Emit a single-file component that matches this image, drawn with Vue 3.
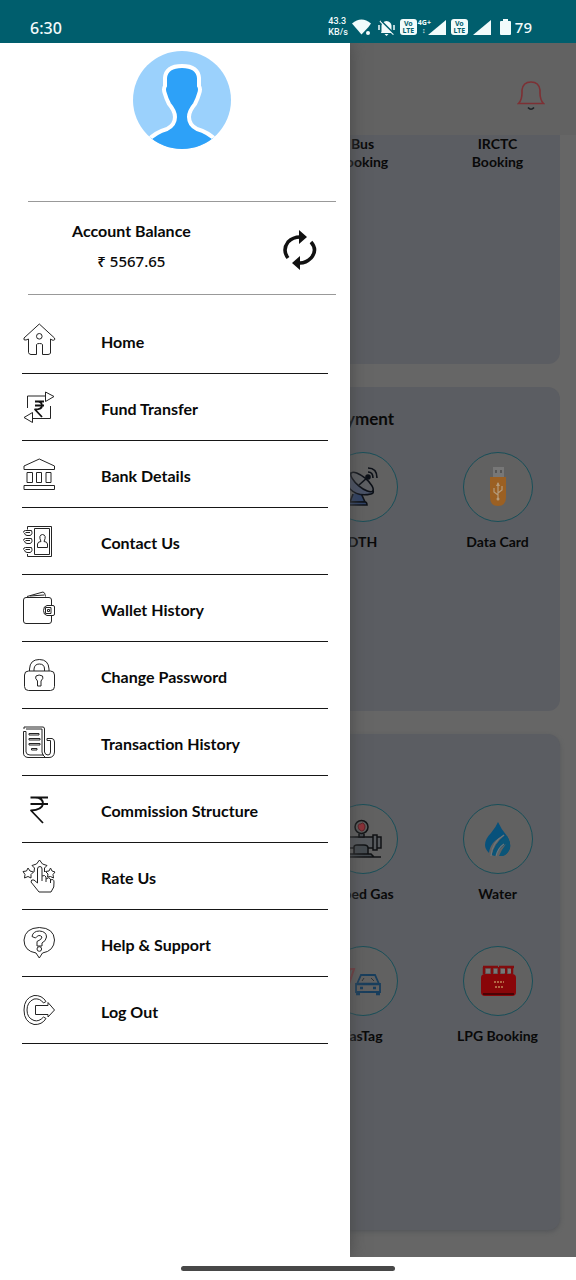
<script setup>
const menu = [
  { id: 'home', label: 'Home' },
  { id: 'fund', label: 'Fund Transfer' },
  { id: 'bank', label: 'Bank Details' },
  { id: 'contact', label: 'Contact Us' },
  { id: 'wallet', label: 'Wallet History' },
  { id: 'password', label: 'Change Password' },
  { id: 'history', label: 'Transaction History' },
  { id: 'commission', label: 'Commission Structure' },
  { id: 'rate', label: 'Rate Us' },
  { id: 'help', label: 'Help & Support' },
  { id: 'logout', label: 'Log Out' },
]
</script>

<template>
  <div class="screen">
    <header class="status">
      <span class="clock">6:30</span>
      <div class="indicators">
        <div class="speed"><span>43.3</span><span>KB/s</span></div>
        <svg class="wifi" width="19" height="17" viewBox="0 0 19 17" aria-hidden="true">
          <path d="M0 4.500Q9.500-3.500 19 4.500L16.500 8L9.500 15.500Z" fill="#f2fbfb" />
          <circle cx="16" cy="14" r="2" fill="#f2fbfb" />
        </svg>
        <svg class="mute" width="17" height="17" viewBox="0 0 17 17" aria-hidden="true">
          <path d="M3.500 12.500V6.500Q4 2.500 8.500 2Q13 2.500 13.500 6.500V12.500L14 14H3ZM6.500 15H10.500L8.500 17Z" fill="#f2fbfb" />
          <path d="M1 6V11M16 6V11M2 2L15.500 15.500" stroke="#f2fbfb" stroke-width="1.500" />
          <path d="M3 1.500L16 14.500" stroke="#005e6d" stroke-width="1.500" />
        </svg>
        <span class="volte">Vo<br />LTE</span>
        <span class="net">4G+<br />↕</span>
        <svg class="signal" width="18" height="15" viewBox="0 0 18 15" aria-hidden="true"><path d="M18 0V15H0Z" fill="#f2fbfb" /></svg>
        <span class="volte second">Vo<br />LTE</span>
        <svg class="signal two" width="18" height="15" viewBox="0 0 18 15" aria-hidden="true"><path d="M18 0V15H0Z" fill="#f2fbfb" /></svg>
        <svg class="battery" width="11" height="16" viewBox="0 0 11 16" aria-hidden="true"><path d="M3 0H8V2H10Q11 2 11 3V15Q11 16 10 16H1Q0 16 0 15V3Q0 2 1 2H3Z" fill="#f2fbfb" /></svg>
        <span class="percent">79</span>
      </div>
    </header>

    <div class="stage">
      <main class="page">
        <div class="topbar">
          <button class="bell" type="button" aria-label="Notifications">
            <svg width="28" height="32" viewBox="0 0 28 32" fill="none">
              <path d="M1.500 23.500Q5 20 5 13V10Q6 2 14 2Q22 2 23 10V13Q23 20 26.500 23.500Z" stroke="#7d3034" stroke-width="1.600" />
              <path d="M11 27.500Q14 31 17 27.500" stroke="#1d2226" stroke-width="1.600" />
            </svg>
          </button>
        </div>

        <section class="card travel">
          <div class="tiles">
            <div class="tile third"><span>Bus<br />Booking</span></div>
            <div class="tile"><span>IRCTC<br />Booking</span></div>
          </div>
        </section>

        <section class="card recharge">
          <h2>Payment</h2>
          <div class="tiles">
            <div class="tile third">
              <div class="disc">
                <svg width="44" height="44" viewBox="3 0 44 44" fill="none" stroke="#0d1118" stroke-width="1.600">
                  <path d="M15 29L12 37H27L22 26" fill="#2f4266" />
                  <path d="M8 40V37H27Q29 37 29 40Z" fill="#2f4266" />
                  <path d="M13 8Q5 15 12 24Q20 32 33 29Q37 28 34 24Z" fill="#4a5368" />
                  <ellipse cx="24" cy="17" rx="14" ry="5" transform="rotate(40 24 17)" fill="#5d5f63" />
                  <path d="M21 20L30 12" /><circle cx="30" cy="12" r="2" fill="#0d1118" />
                  <path d="M30 7Q35 7 35 13M30 3Q39 3 39 13" />
                </svg>
              </div>
              <span>DTH</span>
            </div>
            <div class="tile">
              <div class="disc">
                <svg width="44" height="44" viewBox="0 0 44 44">
                  <rect x="17" y="2" width="11" height="10" fill="#777" />
                  <path d="M20 5V8M25 5V8" stroke="#555" stroke-width="2" />
                  <path d="M14 12H30V32Q30 41 22 41Q14 41 14 32Z" fill="#9b6023" />
                  <path d="M22 18V35M22 30L18 27V23M22 28L26 25V21" fill="none" stroke="#b59b7b" stroke-width="1.200" />
                  <path d="M20 21L22 17L24 21Z" fill="#b59b7b" /><circle cx="22" cy="34" r="1.500" fill="#b59b7b" />
                </svg>
              </div>
              <span>Data Card</span>
            </div>
          </div>
        </section>

        <section class="card utility">
          <div class="tiles">
            <div class="tile third">
              <div class="disc">
                <svg width="44" height="44" viewBox="1 1 44 44" fill="none" stroke="#101214" stroke-width="1.500">
                  <path d="M1 21H33V32H1ZM33 19H37V34H33ZM37 21H41V32H37ZM1 19H7V34H1Z" fill="#56595d" />
                  <path d="M14 38V31Q14 29 17 29H24Q28 29 28 32V38M9 38H31L34 41H6ZM1 41H41M19 18V21H24V18" fill="#444a4f" />
                  <circle cx="21.500" cy="11" r="6.500" fill="#5c5c5c" />
                  <path d="M18 10Q19 7 21 8Q23 5 25 10Q25 15 21.500 15Q18 14 18 10Z" fill="#8c3037" stroke="#5d2025" stroke-width="1" />
                </svg>
              </div>
              <span>Piped Gas</span>
            </div>
            <div class="tile">
              <div class="disc">
                <svg width="44" height="44" viewBox="0 0 44 44">
                  <path d="M22 5Q25 12 31 19Q35 25 34 31Q32 37 27 39Q34 28 29 25Q22 31 20 39L16 38Q18 27 29 18Q14 24 13 36Q9 32 9 28Q9 22 15 16Q20 10 22 5Z" fill="#07517b" />
                  <path d="M31 19Q35 25 34 31Q32 37 27 39L23 39Q26 32 30 27Q22 32 20 39L16 38Q18 27 31 19Z" fill="#0b5578" />
                  <path d="M15 39Q16 25 28 18M20 39Q22 31 28 27" fill="none" stroke="#6b777c" stroke-width="1.200" />
                </svg>
              </div>
              <span>Water</span>
            </div>
            <div class="tile third">
              <div class="disc">
                <svg width="44" height="44" viewBox="1 0 44 44" fill="none">
                  <path d="M3 27L10 10L14 10L7 31" stroke="#793c40" stroke-width="2" />
                  <path d="M17 25L21 16H35L39 25ZM16 25H40V33H16Z" stroke="#183e5d" stroke-width="1.800" />
                  <path d="M17 25H39M20 29H23M33 29H36M16 35H20M36 35H40" stroke="#183e5d" stroke-width="2.500" />
                  <path d="M24 19L22 22M31 19L34 22" stroke="#303437" />
                </svg>
              </div>
              <span>FasTag</span>
            </div>
            <div class="tile">
              <div class="disc">
                <svg width="44" height="44" viewBox="0 0 44 44">
                  <rect x="5" y="15" width="35" height="22" rx="4" fill="#890609" />
                  <path d="M7 8H22M23 8H38M8 8V15M16 8V15M23 8V15M30 8V15M36 8V15" stroke="#810c0e" stroke-width="2.500" />
                  <path d="M10 12H14M25 12H29M18 12H21M32 12H35" stroke="#777" stroke-width="4" />
                  <path d="M7 35H38" stroke="#4b0305" stroke-width="2" />
                  <path d="M18 23H28M19 28H27" stroke="#b36743" stroke-width="2" stroke-dasharray="2 1" />
                </svg>
              </div>
              <span>LPG Booking</span>
            </div>
          </div>
        </section>
      </main>

      <aside class="drawer">
        <svg class="avatar" viewBox="0 0 98 98" role="img" aria-label="Profile">
          <defs><clipPath id="round"><circle cx="49" cy="49" r="49" /></clipPath></defs>
          <g clip-path="url(#round)">
            <rect width="98" height="98" fill="#9bd1fc" />
            <path d="M49 15Q65 15 66 27V35Q68 38 66 43Q65 47 62 53Q56 60 56 66Q56 74 64 78Q75 81 84 90L98 110H0L14 90Q23 81 34 78Q42 74 42 66Q42 60 36 53Q33 47 32 43Q30 38 32 35V27Q33 15 49 15Z" fill="#2da1f8" stroke="#fff" stroke-width="4" />
          </g>
        </svg>
        <section class="balance">
          <div class="amount">
            <h1>Account Balance</h1>
            <p>₹ 5567.65</p>
          </div>
          <button class="refresh" type="button" aria-label="Refresh balance">
            <svg width="36" height="42" viewBox="0 0 36 42">
              <path d="M6 29Q0 21 6 13Q11 8 18 8M29 13Q36 21 29 29Q24 34 18 34" fill="none" stroke="#111" stroke-width="3.500" />
              <path d="M17 1L25 8L17 15ZM18 27L10 34L18 41Z" fill="#111" />
            </svg>
          </button>
        </section>

        <nav class="menu">
          <a v-for="item in menu" :key="item.id" href="#">
            <svg class="icon" viewBox="0 0 34 34" aria-hidden="true">
              <g v-if="item.id === 'home'">
                <path d="M17.300 1L32.500 15Q33.500 18 30 17L28.500 16V30Q28 31.500 26 31.500H20.500V21.500Q20 20.500 17.500 20.500Q15 20.500 14.500 21.500V31.500H9Q7 31.500 6.500 29.500V16L4 17Q1 17.500 2 15Z" />
                <circle cx="17.300" cy="13.300" r="2.800" />
              </g>
              <g v-else-if="item.id === 'fund'">
                <path d="M5.500 18V6H23.500M28.500 16V28.500H10.500M23.500 2L32 6.500L23.500 11.500ZM10.500 22.500L2 27.500L10.500 32.500Z" />
                <path class="bold" d="M13 11.500H22M13 15.500H22M13 11.500Q20 11 20 15.500Q20 19.500 13 19.500L20 27" />
              </g>
              <g v-else-if="item.id === 'bank'">
                <path d="M17.300 2L32.500 9V12.500H2V9ZM2 28.500H32.500V32.500H2ZM5 15.500H10.500V25.500H5ZM14.500 15.500H19.500V25.500H14.500ZM24 15.500H29V25.500H24Z" />
              </g>
              <g v-else-if="item.id === 'contact'">
                <path d="M5.500 5.500V2.500H29.500V32.500H5.500V30M12.500 4.500H27.500V30.500H12.500ZM15.500 23.500V20Q16 17.500 19 17.500Q16 11 20.500 10.500Q25 11 22 17.500Q25 17.500 25.500 20V23.500Z" />
                <path d="M9.500 6.500H3.500Q1.500 6.500 1.500 8.500M3.500 8.500H8M9.500 6.500Q11 10.500 8 11.500H5Q2.500 11 2.500 9M9.500 14.500H3.500Q1.500 14.500 1.500 16.500M3.500 16.500H8M9.500 14.500Q11 18.500 8 19.500H5Q2.500 19 2.500 17M9.500 23.500H3.500Q1.500 23.500 1.500 25.500M3.500 25.500H8M9.500 23.500Q11 27.500 8 28.500H5Q2.500 28 2.500 26" />
              </g>
              <g v-else-if="item.id === 'wallet'">
                <path d="M29.500 14V9Q29.500 6.500 27 6.500H4Q1.500 6.500 1.500 9V30Q1.500 32.500 4 32.500H27Q29.500 32.500 29.500 30V25M5 5.500L21 1Q23 1 23.500 5.500M8 5L22 4M25 14.500H31Q32.500 14.500 32.500 16V23Q32.500 24.500 31 24.500H25Q21.500 24 21.500 19.500Q21.500 15 25 14.500ZM23.500 16.500H29V22.500H23.500ZM25.500 18.500H27.500V20.500H25.500Z" />
              </g>
              <g v-else-if="item.id === 'password'">
                <rect x="2.500" y="13" width="30" height="19.500" rx="4" />
                <path d="M7.500 13V11Q8 1.500 17.300 1.500Q26.500 1.500 27 11V13M12 13V11Q12.500 6 17.300 6Q22.500 6 22.500 11V13M15.500 23Q12.500 20 14 18Q17 16 20.500 18Q22 20 19 23V28H15.500Z" />
              </g>
              <g v-else-if="item.id === 'history'">
                <path d="M2 4V2H21Q22.500 2 22.500 4V27Q23 30 26 30Q28.500 30 28.500 27V15.500H25V13.500H30Q32.500 14 32.500 17V27Q32 32.500 27 32.500H6Q1.500 32 1.500 28V6.500H4V27Q4.500 30 8 30H22M4 4H20V27Q20 30 23 32" />
                <path d="M7 8.500H17V10H7ZM7 13.500H18V15H7ZM7 18.500H18V20H7ZM9.500 23.500H15V25H9.500Z" />
              </g>
              <path v-else-if="item.id === 'commission'" class="bold" d="M8.500 5.500H26M8.500 12H26M13 5.500Q21 5.500 21 12Q20 18 9 18.500L21 31" />
              <g v-else-if="item.id === 'rate'">
                <path d="M12 13L12.500 9L10 6.500L14.500 5L17.500 1L20.500 5L25 6.500L22.500 9V13M6 9L8 12L11.500 13L9 15.500V19L6 17.500L2.500 19L3 15.500L1 12.500L4.500 12ZM28.500 9L30 12L33 13L31 15.500L31.500 19L28.500 17.500L25.500 18L26 15L23.500 12.500L27 12Z" />
                <path d="M15.500 24V10Q15.500 7.500 18 7.500Q20 7.500 20 10V22M20 17Q23 15.500 24 18V23M24 20Q27 17.500 28.500 20V24M28.500 21Q32 19.500 32 23Q33 28 29 33H17L9 23Q9 20 12 21L15.500 24" />
              </g>
              <g v-else-if="item.id === 'help'">
                <path d="M14 27Q2 25 2 14Q3 2 17.300 1.500Q32 2 32.500 14Q32 25 20.500 27L17.300 32Z" />
                <path d="M10 10.500Q11 5 17.500 5Q24.500 5.500 24.500 11Q24 15 20 17V20H15V15.500Q20 13.500 20 11Q17 7.500 13.500 12Z" />
                <circle cx="17.300" cy="23" r="2.300" />
              </g>
              <g v-else>
                <path d="M24 8.500Q20 2 12 2.500Q2 5 2 17Q2 29 12 31.500Q20 32 24 25.500L21.500 24Q17 29 12 27.500Q5 25 5 17Q5 9 12 6Q18 5 21.500 10ZM13.500 12.500H26V9.500L32.500 17L26 24V21.500H13.500Z" />
              </g>
            </svg>
            <span>{{ item.label }}</span>
          </a>
        </nav>
      </aside>
    </div>

    <footer class="gesture"><div class="pill"></div></footer>
  </div>
</template>

<style>
body {
  margin: 0;
  background: #fff;
}
</style>

<style scoped>
* {
  box-sizing: border-box;
}
.screen {
  display: flex;
  flex-direction: column;
  min-height: 100vh;
  color: #090909;
  font-family: Lato, "Noto Sans", sans-serif;
}
h1, h2, p {
  margin: 0;
}
button {
  padding: 0;
  border: 0;
  background: none;
}
svg {
  display: block;
}
.status {
  display: flex;
  justify-content: space-between;
  align-items: flex-end;
  height: 43px;
  padding: 0 44px 4px 30px;
  background: #005e6d;
  color: #f2fbfb;
  font-family: "Noto Sans", sans-serif;
}
.clock {
  font-size: 16px;
  line-height: 22px;
  font-weight: 500;
}
.indicators {
  display: flex;
  align-items: center;
  height: 24px;
}
.speed {
  display: flex;
  flex-direction: column;
  font-family: Roboto, sans-serif;
  font-size: 9px;
  line-height: 11px;
  font-weight: 500;
}
.wifi {
  margin-left: 4px;
}
.mute {
  margin-left: 7px;
}
.volte {
  width: 17px;
  height: 16px;
  margin-left: 5px;
  padding-top: 1px;
  border-radius: 3px;
  background: #f2fbfb;
  color: #005e6d;
  font-size: 7px;
  line-height: 7px;
  font-weight: 700;
  text-align: center;
}
.net {
  width: 12px;
  margin-left: 1px;
  font-size: 7px;
  line-height: 8px;
  font-weight: 700;
  text-align: center;
  white-space: nowrap;
}
.signal {
  margin-left: -2px;
}
.signal.two,
.second {
  margin-left: 5px;
}
.battery {
  margin-left: 9px;
}
.percent {
  margin-left: 4px;
  font-size: 15px;
  line-height: 22px;
  font-weight: 500;
}
.stage {
  position: relative;
  display: flex;
  flex-direction: column;
  flex: 1;
  overflow: hidden;
}
.page {
  flex: 1;
  padding-bottom: 25px;
  background: #666;
}
.topbar {
  display: flex;
  justify-content: flex-end;
  align-items: center;
  height: 92px;
  padding: 14px 31px 0 0;
  background: #626262;
}
.card {
  margin: 0 16px 23px;
  border-radius: 12px;
  background: #5b5d62;
}
.travel {
  padding-bottom: 193px;
  border-radius: 0 0 12px 12px;
}
.recharge {
  padding: 20px 0 160px;
}
.utility {
  padding: 70px 0 185px;
  margin-bottom: 0;
  box-shadow: 0 2px 4px #55575a;
}
h2 {
  margin-bottom: 22px;
  padding-right: 166px;
  font-size: 17px;
  line-height: 23px;
  text-align: right;
}
.tiles {
  display: grid;
  grid-template-columns: repeat(4, 1fr);
  row-gap: 43px;
  margin: 0 -5px 0 9px;
}
.tile {
  display: flex;
  flex-direction: column;
  align-items: center;
  gap: 10px;
  font-size: 14px;
  line-height: 19px;
  font-weight: 700;
  text-align: center;
  white-space: nowrap;
}
.travel .tile {
  line-height: 18px;
}
.third {
  grid-column: 3;
}
.disc {
  display: grid;
  place-items: center;
  width: 70px;
  height: 70px;
  border: 1px solid #184f59;
  border-radius: 50%;
  background: #616161;
}
.drawer {
  position: absolute;
  top: 0;
  bottom: 0;
  left: 0;
  width: 350px;
  max-width: 90%;
  padding: 8px 14px 0 28px;
  background: #fff;
  box-shadow: 0 0 16px #484848;
}
.avatar {
  width: 98px;
  height: 98px;
  margin: 0 auto 52px;
}
.balance {
  display: flex;
  justify-content: space-between;
  align-items: center;
  height: 94px;
  padding: 3px 18px 0 44px;
  border: solid #999;
  border-width: 1px 0;
}
.amount {
  text-align: center;
}
h1 {
  font-size: 16px;
  line-height: 24px;
}
p {
  font-size: 15px;
  line-height: 24px;
  margin-top: 6px;
  margin-bottom: 8px;
  font-family: "Noto Sans", sans-serif;
  font-weight: 500;
}
.menu {
  margin: 12px 8px 0 -6px;
}
.menu a {
  display: flex;
  align-items: center;
  gap: 45px;
  height: 67px;
  border-bottom: 1px solid #161616;
  color: inherit;
  font-size: 16px;
  font-weight: 700;
  text-decoration: none;
}
.menu span {
  padding-top: 3px;
  line-height: 24px;
}
.icon {
  width: 34px;
  height: 34px;
  fill: none;
  stroke: #242424;
  stroke-width: 1;
  stroke-linejoin: round;
}
.bold {
  stroke: #111;
  stroke-width: 1.8px;
}
.gesture {
  display: grid;
  place-items: center;
  height: 23px;
  background: #fff;
}
.pill {
  width: 37%;
  height: 5px;
  border-radius: 3px;
  background: #484848;
}
</style>
